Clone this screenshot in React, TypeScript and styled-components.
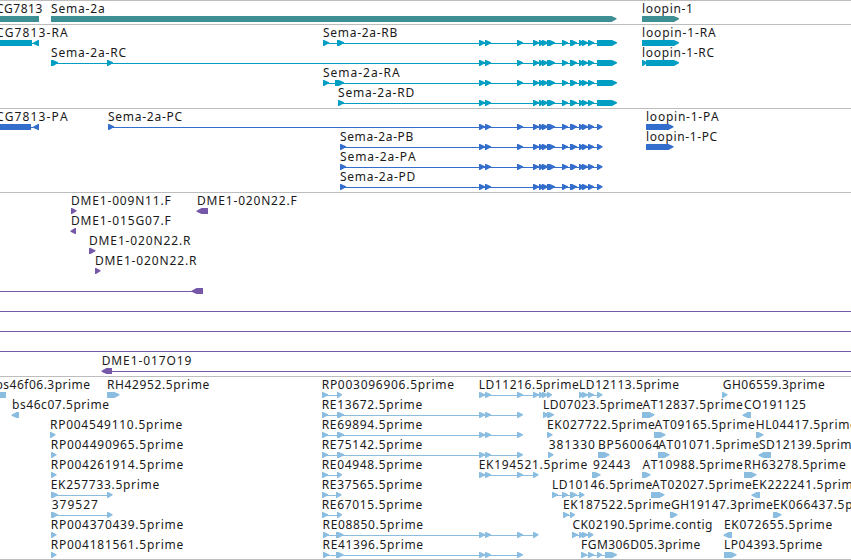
import React from "react";
import styled, { createGlobalStyle } from "styled-components";

type Direction = "right" | "left" | "none";
type Exon = [start: number, end: number, direction?: Direction];

interface Feature {
  name?: string;
  /** Horizontal extent of the label's ink. */
  label?: [number, number];
  exons: Exon[];
  /** Intron line, when it reaches past the exons. */
  line?: [number, number];
}

interface TrackData {
  id: string;
  color: string;
  rows: Feature[][];
}

const FONT = '12px "Noto Sans", "Open Sans", sans-serif';

const GlobalStyle = createGlobalStyle`
  body { margin: 0; background: #fff; overflow: hidden; }
`;

const Viewer = styled.main`
  display: flex;
  flex-direction: column;
  width: 851px;
  height: 560px;
  box-sizing: border-box;
  overflow: hidden;
  background: #fff;
  border-bottom: 1px solid #bdbdbd;
`;

const Track = styled.section<{ $color: string }>`
  flex: none;
  display: flex;
  flex-direction: column;
  padding: 1px 0 2px;
  border-top: 1px solid #bdbdbd;
  color: ${(p) => p.$color};
`;

const Row = styled.div`
  position: relative;
  height: 20px;
`;

const Label = styled.span`
  position: absolute;
  top: 0;
  font: ${FONT};
  line-height: 13px;
  color: #1a1a1a;
  white-space: pre;
  font-kerning: none;
`;

const Glyphs = styled.svg`
  position: absolute;
  left: 0;
  bottom: 0;
  width: 851px;
  height: 6px;
  fill: currentColor;
`;

const right = (s: number, e: number): Exon => [s, e, "right"];
const left = (s: number, e: number): Exon => [s, e, "left"];
const block = (s: number, e: number): Exon => [s, e, "none"];
const f = (name: string, x0: number, x1: number, ...exons: Exon[]): Feature => ({
  name,
  label: [x0, x1],
  exons,
});

const pairA = [right(479, 485), right(485, 491)];
const e517 = right(517, 523);
const middle = [
  right(533, 539), right(539, 544), right(542, 548), right(547, 555),
  right(562, 568), right(570, 577), right(579, 584), right(582, 588), right(588, 594),
];
const utr = right(597, 617);
const cds = right(597, 602.5);
const codingTail = [...pairA, e517, ...middle, cds];

const reShort = (name: string): Feature => f(name, 322.7, 422.5, right(322, 328), right(337, 342));
const reLong = (name: string): Feature =>
  f(name, 322.7, 422.5, right(322, 328), right(337, 344), ...pairA, e517);
const rp = (name: string): Feature => f(name, 51.7, 183.5, right(51, 56.5));

const tracks: TrackData[] = [
  {
    id: "gene",
    color: "#3d8f94",
    rows: [[
      f("CG7813", -4, 42.5, block(-10, 39)),
      f("Sema-2a", 51, 104, right(51, 616.5)),
      f("loopin-1", 643, 691, right(642, 679)),
    ]],
  },
  {
    id: "transcript",
    color: "#009ec2",
    rows: [
      [
        f("CG7813-RA", -4, 68, block(-10, 32), left(33, 39)),
        f("Sema-2a-RB", 323, 397.5, right(323, 329), right(337, 344), ...pairA, e517, ...middle, utr),
        f("loopin-1-RA", 643, 716, right(642, 679)),
      ],
      [
        f("Sema-2a-RC", 51, 126.5, right(51, 58), right(107, 113), ...pairA, e517, ...middle, utr),
        f("loopin-1-RC", 643, 714.5, right(642, 647), right(646, 679)),
      ],
      [f("Sema-2a-RA", 323, 400, right(323, 329), right(335, 344), ...pairA, e517, ...middle, utr)],
      [f("Sema-2a-RD", 338, 414.5, right(338, 344), ...pairA, ...middle, utr)],
    ],
  },
  {
    id: "protein",
    color: "#336ecc",
    rows: [
      [
        f("CG7813-PA", -4, 68, block(-10, 31), left(33, 39)),
        f("Sema-2a-PC", 108, 182.5, right(108, 114), ...codingTail),
        f("loopin-1-PA", 647, 719, right(646, 673.5)),
      ],
      [
        f("Sema-2a-PB", 340, 413.5, right(340, 346), ...codingTail),
        f("loopin-1-PC", 647, 717.5, right(646, 673.5)),
      ],
      [f("Sema-2a-PA", 340, 416, right(340, 346), ...codingTail)],
      [f("Sema-2a-PD", 340, 415.5, right(340, 346), ...pairA, ...middle, cds)],
    ],
  },
  {
    id: "bac",
    color: "#7658a8",
    rows: [
      [
        f("DME1-009N11.F", 72, 170.5, right(71, 76.5)),
        f("DME1-020N22.F", 198, 296.5, left(196.5, 208)),
      ],
      [f("DME1-015G07.F", 72, 170.5, left(70.5, 76))],
      [f("DME1-020N22.R", 90, 191, right(89, 95.5))],
      [f("DME1-020N22.R", 96, 197, right(95, 100.5))],
      [{ exons: [left(191.5, 203)], line: [0, 198] }],
      [{ exons: [], line: [0, 851] }],
      [{ exons: [], line: [0, 851] }],
      [{ exons: [], line: [0, 851] }],
      [{ name: "DME1-017O19", label: [102.7, 191.5], exons: [left(101.5, 112)], line: [108, 851] }],
    ],
  },
  {
    id: "est",
    color: "#8abddf",
    rows: [
      [
        f("bs46f06.3prime", -3.5, 90.3, block(-5, 6)),
        f("RH42952.5prime", 108, 209.5, right(107, 119.5)),
        f("RP003096906.5prime", 322.7, 454.3, right(322, 328), right(337, 342)),
        f("LD11216.5prime", 479.7, 579, ...pairA, e517, right(533, 539), right(539, 544), right(542, 548), right(547, 552)),
        f("LD12113.5prime", 580, 679.3, right(579, 584), right(582, 588), right(588, 594), right(597, 602.5)),
        f("GH06559.3prime", 722.7, 825, right(722, 727.5)),
      ],
      [
        f("bs46c07.5prime", 13, 109.3, left(11.5, 19)),
        reLong("RE13672.5prime"),
        f("LD07023.5prime", 544, 643, right(543, 549), right(547, 554)),
        f("AT12837.5prime", 642.5, 743, right(642, 654.5)),
        f("CO191125", 744, 806, left(742.5, 751)),
      ],
      [
        f("RP004549110.5prime", 51, 182.5, right(50, 55.5)),
        reLong("RE69894.5prime"),
        f("EK027722.5prime", 548, 655, right(547, 552.5)),
        f("AT09165.5prime", 654.5, 755, right(654, 665.5)),
        f("HL04417.5prime", 756.7, 857, right(756, 763.5)),
      ],
      [
        rp("RP004490965.5prime"),
        reLong("RE75142.5prime"),
        f("381330", 548.7, 595, right(548, 553.5)),
        f("BP560064", 599, 659.5, right(598, 609.5)),
        f("AT01071.5prime", 658.3, 759, right(658, 669.5)),
        f("SD12139.5prime", 759, 859, left(758.5, 771)),
      ],
      [
        rp("RP004261914.5prime"),
        reShort("RE04948.5prime"),
        f("EK194521.5prime", 479.7, 587.5, ...pairA, e517, right(533, 538.5)),
        f("92443", 593, 630.5, right(592, 600.5)),
        f("AT10988.5prime", 642.5, 743, right(642, 650.5)),
        f("RH63278.5prime", 745, 846, right(744, 756.5)),
      ],
      [
        f("EK257733.5prime", 51.7, 159.5, right(51, 58), right(107, 112.5)),
        f("RE37565.5prime", 322.7, 422.5, right(322, 328), right(336, 341.5)),
        f("LD10146.5prime", 553, 652.5, right(552, 558), right(562, 568), right(570, 577), right(579, 584.5)),
        f("AT02027.5prime", 652, 752, right(651, 664.5)),
        f("EK222241.5prime", 753, 860.5, left(751.5, 760)),
      ],
      [
        f("379527", 51.7, 98, right(51, 58), right(107, 112.5)),
        reShort("RE67015.5prime"),
        f("EK187522.5prime", 564, 671, right(563, 569), right(570, 575)),
        f("GH19147.3prime", 671, 773, right(670, 677.5)),
        f("EK066437.5prime", 774, 881.5, right(773, 781.5)),
      ],
      [
        rp("RP004370439.5prime"),
        f("RE08850.5prime", 323.5, 423.3, right(323, 329), right(336, 343.5), ...pairA, e517, right(533, 538.5)),
        f("CK02190.5prime.contig", 572.5, 712, right(572, 578), right(579, 584), right(582, 588), right(588, 593.5)),
        f("EK072655.5prime", 725, 832.5, left(723.5, 732)),
      ],
      [
        rp("RP004181561.5prime"),
        f("RE41396.5prime", 323.5, 423.3, right(323, 329), right(336, 343.5), ...pairA, e517),
        f("FGM306D05.3prime", 582, 700.5, right(581, 587), right(588, 594), right(597, 602), right(605, 617)),
        f("LP04393.5prime", 725, 822.5, right(724, 736.5)),
      ],
    ],
  },
];

const measuring = document.createElement("canvas").getContext("2d")!;

/** Left offset and letter spacing that make a label's ink span its extent. */
function fitLabel(text: string, [x0, x1]: [number, number]): React.CSSProperties {
  measuring.font = FONT;
  measuring.fontKerning = "none";
  const m = measuring.measureText(text);
  const ink = m.actualBoundingBoxLeft + m.actualBoundingBoxRight;
  const spacing = (x1 - x0 - ink) / (text.length - 1);
  return { left: x0 + m.actualBoundingBoxLeft, letterSpacing: spacing };
}

function exonPath([s, e, direction]: Exon): string {
  const head = Math.min(6, e - s);
  if (direction === "right") return `M${s} 0H${e - head + 1}L${e} 2.3V3.3L${e - head + 1} 6H${s}Z`;
  if (direction === "left") return `M${e} 0H${s + head - 1}L${s} 2.7V3.7L${s + head - 1} 6H${e}Z`;
  return `M${s} 0H${e}V6H${s}Z`;
}

function intron({ exons, line }: Feature): string {
  if (!line && exons.length < 2) return "";
  const [a, b] = line ?? [exons[0][0], exons[exons.length - 1][0]];
  return `M${a} 3H${b}V4H${a}Z`;
}

function FeatureRow({ features }: { features: Feature[] }) {
  return (
    <Row>
      <Glyphs viewBox="0 0 851 6" aria-hidden="true">
        {features.map((feature, i) => (
          <React.Fragment key={i}>
            <path d={intron(feature)} />
            {feature.exons.map((exon, j) => (
              <path key={j} d={exonPath(exon)} />
            ))}
          </React.Fragment>
        ))}
      </Glyphs>
      {features.map(
        (feature, i) =>
          feature.name &&
          feature.label && (
            <Label key={i} style={fitLabel(feature.name, feature.label)}>
              {feature.name}
            </Label>
          ),
      )}
    </Row>
  );
}

export default function App() {
  return (
    <>
      <GlobalStyle />
      <Viewer>
        {tracks.map((track) => (
          <Track key={track.id} $color={track.color}>
            {track.rows.map((features, i) => (
              <FeatureRow key={i} features={features} />
            ))}
          </Track>
        ))}
      </Viewer>
    </>
  );
}
